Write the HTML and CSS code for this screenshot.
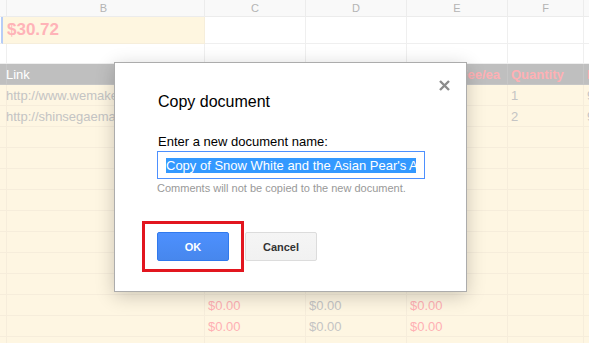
FILE: index.html
```html
<!DOCTYPE html>
<html>
<head>
<meta charset="utf-8">
<link rel="stylesheet" href="styles.css">
</head>
<body>
<div class="sheet">
  <div class="row colhdr">
    <div class="c"></div><div class="c lbl">B</div><div class="c lbl">C</div><div class="c lbl">D</div><div class="c lbl">E</div><div class="c lbl">F</div><div class="c lbl"></div>
  </div>
  <div class="row r1">
    <div class="c sel"></div><div class="c y total">$30.72</div><div class="c"></div><div class="c"></div><div class="c"></div><div class="c"></div><div class="c"></div>
  </div>
  <div class="row r2">
    <div class="c"></div><div class="c"></div><div class="c"></div><div class="c"></div><div class="c"></div><div class="c"></div><div class="c"></div>
  </div>
  <div class="row thead">
    <div class="c"></div><div class="c th">Link</div><div class="c th"></div><div class="c th"></div><div class="c th pk right">Fee/ea</div><div class="c th pk">Quantity</div><div class="c th pk">Price</div>
  </div>
  <div class="row yr">
    <div class="c"></div><div class="c g">http://www.wemakeprice.com</div><div class="c"></div><div class="c"></div><div class="c"></div><div class="c g">1</div><div class="c g">9</div>
  </div>
  <div class="row yr">
    <div class="c"></div><div class="c g">http://shinsegaemall.com</div><div class="c"></div><div class="c"></div><div class="c"></div><div class="c g">2</div><div class="c g">9</div>
  </div>
  <div class="row yr"><div class="c"></div><div class="c"></div><div class="c"></div><div class="c"></div><div class="c"></div><div class="c"></div><div class="c"></div></div>
  <div class="row yr"><div class="c"></div><div class="c"></div><div class="c"></div><div class="c"></div><div class="c"></div><div class="c"></div><div class="c"></div></div>
  <div class="row yr"><div class="c"></div><div class="c"></div><div class="c"></div><div class="c"></div><div class="c"></div><div class="c"></div><div class="c"></div></div>
  <div class="row yr"><div class="c"></div><div class="c"></div><div class="c"></div><div class="c"></div><div class="c"></div><div class="c"></div><div class="c"></div></div>
  <div class="row yr"><div class="c"></div><div class="c"></div><div class="c"></div><div class="c"></div><div class="c"></div><div class="c"></div><div class="c"></div></div>
  <div class="row yr"><div class="c"></div><div class="c"></div><div class="c"></div><div class="c"></div><div class="c"></div><div class="c"></div><div class="c"></div></div>
  <div class="row yr"><div class="c"></div><div class="c"></div><div class="c"></div><div class="c"></div><div class="c"></div><div class="c"></div><div class="c"></div></div>
  <div class="row yr"><div class="c"></div><div class="c"></div><div class="c"></div><div class="c"></div><div class="c"></div><div class="c"></div><div class="c"></div></div>
  <div class="row yr">
    <div class="c"></div><div class="c"></div><div class="c pk2">$0.00</div><div class="c g">$0.00</div><div class="c pk2">$0.00</div><div class="c"></div><div class="c"></div>
  </div>
  <div class="row yr">
    <div class="c"></div><div class="c"></div><div class="c pk2">$0.00</div><div class="c g">$0.00</div><div class="c pk2">$0.00</div><div class="c"></div><div class="c"></div>
  </div>
  <div class="row yr">
    <div class="c"></div><div class="c"></div><div class="c pk2">$0.00</div><div class="c g">$0.00</div><div class="c pk2">$0.00</div><div class="c"></div><div class="c"></div>
  </div>
</div>

<div class="dialog">
  <button class="close" aria-label="Close">
    <svg width="11" height="11" viewBox="0 0 11 11"><path d="M1 1 L10 10 M10 1 L1 10" stroke="#8c8c8c" stroke-width="2.4" fill="none"/></svg>
  </button>
  <div class="title">Copy document</div>
  <div class="label">Enter a new document name:</div>
  <div class="input"><div class="clip"><span class="hl">Copy of Snow White and the Asian Pear's Adventure</span></div></div>
  <div class="hint">Comments will not be copied to the new document.</div>
  <div class="buttons">
    <button class="btn ok">OK</button>
    <button class="btn cancel">Cancel</button>
  </div>
</div>
<div class="callout"></div>
</body>
</html>
```
FILE: styles.css
```css
html, body {
  margin: 0;
  padding: 0;
}
body {
  width: 589px;
  height: 343px;
  overflow: hidden;
  position: relative;
  background: #fff;
  font-family: "Liberation Sans", Arial, sans-serif;
}
.sheet {
  display: flex;
  flex-direction: column;
}
.row {
  display: grid;
  grid-template-columns: 3px 202px 101px 101px 101px 76px 1fr;
}
.c {
  box-sizing: border-box;
  border-right: 1px solid #efefef;
  border-bottom: 1px solid #efefef;
  padding: 0 3px;
  font-size: 13px;
  white-space: nowrap;
  overflow: hidden;
  display: flex;
  align-items: center;
}
.colhdr { height: 17px; background: #f9f9f9; }
.colhdr .c { border-color: #ececec; }
.lbl {
  justify-content: center;
  color: #b4b4b4;
  font-size: 11px;
}
.r1 { height: 27px; }
.r2 { height: 20px; }
.sel { border-right: 2px solid #b7cdf6; padding: 0; }
.y { background: #fef6e0; border-color: #f6eedb; }
.total {
  color: #ffb3b8;
  font-weight: bold;
  font-size: 17px;
  padding-left: 4px;
}
.thead { height: 21px; background: #bfbfbf; }
.thead .c { border-color: #c6c6c6; }
.th { color: #fff; font-size: 13px; }
.th.pk { color: #ffb0b4; font-weight: bold; }
.right { justify-content: flex-end; padding-right: 7px; }
.yr { height: 21px; background: #fef6e2; }
.yr .c { border-color: #f6eddb; }
.g { color: #c4c4c4; }
.pk2 { color: #ffb0b4; }

.dialog {
  position: absolute;
  left: 114px;
  top: 62px;
  width: 353px;
  height: 230px;
  box-sizing: border-box;
  border: 1px solid #acacac;
  background: #fff;
  box-shadow: 0 4px 18px rgba(0, 0, 0, 0.2);
  padding: 30px 0 0 42px;
  display: flex;
  flex-direction: column;
  align-items: flex-start;
}
.close {
  position: absolute;
  top: 17px;
  right: 16px;
  width: 11px;
  height: 11px;
  padding: 0;
  border: 0;
  background: none;
  display: block;
}
.close svg { display: block; }
.title {
  font-size: 16px;
  line-height: 18px;
  color: #000;
  padding-left: 1px;
}
.label {
  margin-top: 23px;
  font-size: 13px;
  line-height: 15px;
  color: #000;
  padding-left: 1px;
}
.input {
  margin-top: 2px;
  width: 268px;
  height: 28px;
  box-sizing: border-box;
  border: 1px solid #4d90fe;
  padding: 0 8px;
  display: flex;
  align-items: center;
}
.clip {
  width: 100%;
  overflow: hidden;
  white-space: nowrap;
  font-size: 13px;
  line-height: 15px;
}
.hl {
  background: #3399ff;
  color: #fff;
}
.hint {
  margin-top: 3px;
  font-size: 11px;
  line-height: 13px;
  color: #999;
}
.buttons {
  margin-top: 37px;
  display: flex;
  gap: 16px;
}
.btn {
  width: 72px;
  height: 29px;
  box-sizing: border-box;
  border-radius: 2px;
  font-family: "Liberation Sans", Arial, sans-serif;
  font-size: 11px;
  font-weight: bold;
  padding: 0;
}
.ok {
  color: #fff;
  background: linear-gradient(#4d90fe, #4787ed);
  border: 1px solid #3079ed;
}
.cancel {
  color: #333;
  background: linear-gradient(#f5f5f5, #f1f1f1);
  border: 1px solid #dcdcdc;
}
.callout {
  position: absolute;
  left: 142px;
  top: 221px;
  width: 102px;
  height: 51px;
  box-sizing: border-box;
  border: 3px solid #e2161f;
}
```
